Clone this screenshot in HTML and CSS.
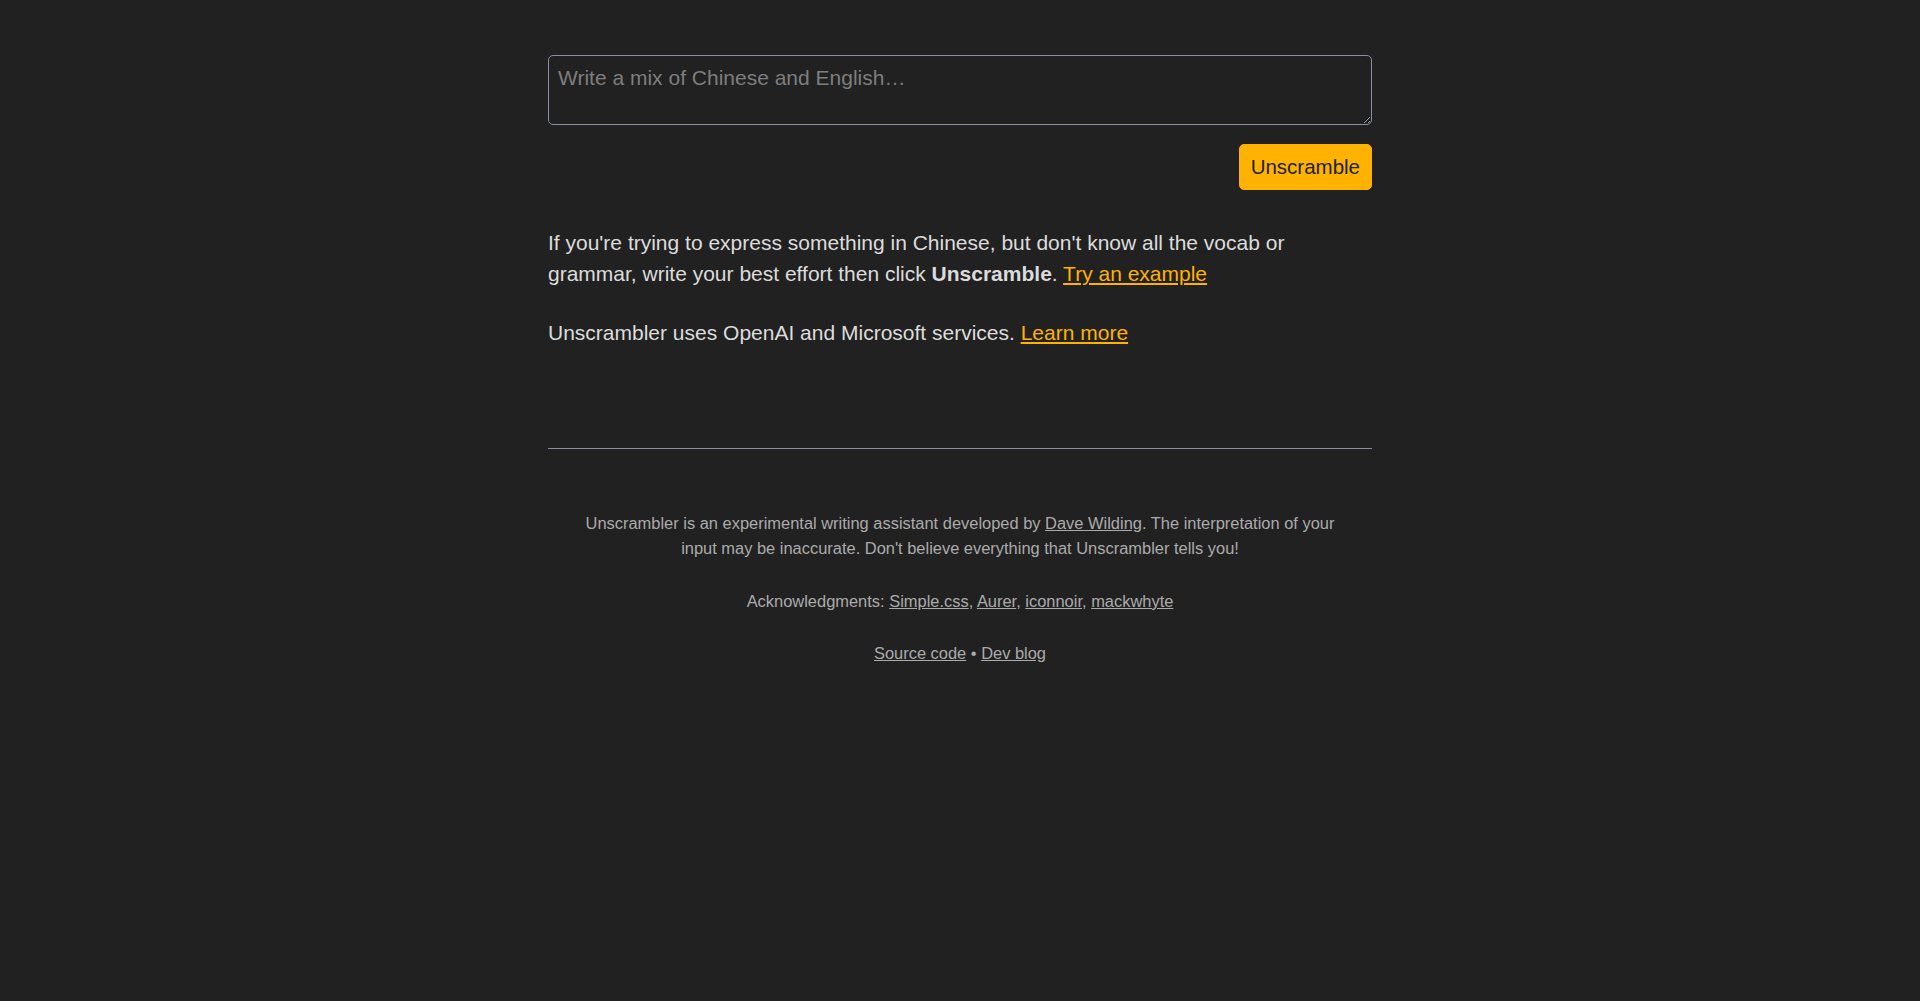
FILE: index.html
```html
<!DOCTYPE html>
<html lang="en">
<head>
<meta charset="utf-8">
<title>Unscrambler</title>
<link rel="stylesheet" href="styles.css">
</head>
<body>
<div class="page">
  <main class="main">
    <form class="compose">
      <textarea class="compose-input" placeholder="Write a mix of Chinese and English…"></textarea>
      <div class="compose-actions">
        <button type="button" class="btn-primary">Unscramble</button>
      </div>
    </form>
    <p class="intro">If you're trying to express something in Chinese, but don't know all the vocab or grammar, write your best effort then click <strong>Unscramble</strong>. <a href="#" class="link-accent">Try an example</a></p>
    <p class="intro">Unscrambler uses OpenAI and Microsoft services. <a href="#" class="link-accent">Learn more</a></p>
  </main>
  <footer class="site-footer">
    <p>Unscrambler is an experimental writing assistant developed by <a href="#">Dave Wilding</a>. The interpretation of your input may be inaccurate. Don't believe everything that Unscrambler tells you!</p>
    <p>Acknowledgments: <a href="#">Simple.css</a>, <a href="#">Aurer</a>, <a href="#">iconnoir</a>, <a href="#">mackwhyte</a></p>
    <p><a href="#">Source code</a> • <a href="#">Dev blog</a></p>
  </footer>
</div>
</body>
</html>
```

FILE: styles.css
```css
html, body {
  margin: 0;
  padding: 0;
  background: #212121;
}

body {
  font-family: "Liberation Sans", Arial, sans-serif;
  color: #dcdcdc;
  font-size: 21px;
  line-height: 1.5;
}

.page {
  display: grid;
  grid-template-columns: 1fr 824px 1fr;
}

.page > * {
  grid-column: 2;
}

.main {
  padding-top: 55px;
}

.compose {
  margin: 0 0 36.5px 0;
}

.compose-input {
  display: block;
  box-sizing: border-box;
  width: 100%;
  height: 70px;
  margin: 0;
  padding: 10px 9px 6px 9px;
  font-family: inherit;
  font-size: 21px;
  line-height: normal;
  color: #dcdcdc;
  background: #212121;
  border: 1px solid #898ea4;
  border-radius: 5px;
  resize: vertical;
}

.compose-input::placeholder {
  color: #7e7e7e;
}

.compose-actions {
  display: flex;
  justify-content: flex-end;
  margin-top: 19px;
}

.btn-primary {
  font-family: inherit;
  font-size: 20.5px;
  line-height: normal;
  padding: 10px 11px;
  color: #212121;
  background: #ffb300;
  border: 1px solid #ffb300;
  border-radius: 5px;
  cursor: pointer;
}

.intro {
  margin: 27.6px 0;
}

.intro strong {
  font-weight: bold;
}

.link-accent {
  color: #ffb300;
}

.site-footer {
  margin-top: 71.5px;
  padding: 35px 20px 24px 20px;
  border-top: 1px solid #898ea4;
  color: #ababab;
  font-size: 16.45px;
  line-height: 24.9px;
  text-align: center;
}

.site-footer p {
  margin: 27.6px 0;
}

.site-footer a {
  color: #ababab;
}
```
